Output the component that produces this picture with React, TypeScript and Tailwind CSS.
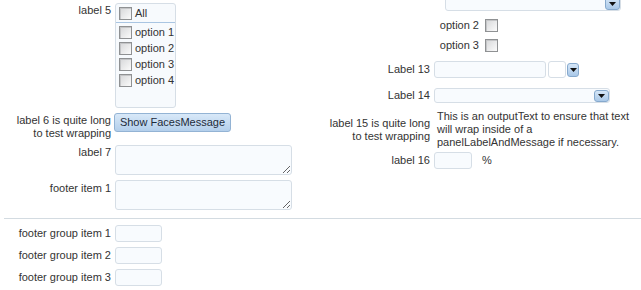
import React from 'react';

const Check = () => (
    <span className="inline-block w-[13px] h-[13px] shrink-0 border border-[#8f9193] bg-gradient-to-br from-[#d6d7d9] to-[#fbfbfb] shadow-[inset_1px_1px_0_#c4c5c7]" />
);

const Arrow = () => (
    <svg width="7" height="4" viewBox="0 0 7 4" className="block">
        <path d="M0 0h7L3.5 4z" fill="#111" />
    </svg>
);

const DropBtn = ({ className = '' }: { className?: string }) => (
    <span
        className={`flex items-center justify-center rounded-[3px] border border-[#86a9cd] bg-gradient-to-b from-[#d5e6f7] to-[#a9c8e8] ${className}`}
    >
        <Arrow />
    </span>
);

const field = 'block rounded-[3px] border border-[#d6dee6] bg-[#f8fbfe] outline-none';

export default function App() {
    return (
        <div className="w-[641px] h-[290px] overflow-hidden bg-white text-[11px] leading-[13px] text-[#333] font-['Liberation_Sans',Arial,sans-serif]">
            <div className="flex">
                {/* left column */}
                <div className="w-[320px] shrink-0 flex flex-col pt-[3px]">
                    <div className="flex gap-[4px]">
                        <div className="w-[111px] text-right pt-[1px]">label 5</div>
                        <div className="w-[61px] h-[105px] rounded-[3px] border border-[#d6dee6] bg-[#f7fafd]">
                            <div className="h-[19px] flex items-center gap-[3px] pl-[3px] border-b border-[#a9c5e2]">
                                <Check />
                                <span>All</span>
                            </div>
                            <div className="pt-[1px]">
                                {['option 1', 'option 2', 'option 3', 'option 4'].map((o) => (
                                    <div key={o} className="h-[16px] flex items-center gap-[3px] pl-[3px]">
                                        <Check />
                                        <span className="whitespace-nowrap">{o}</span>
                                    </div>
                                ))}
                            </div>
                        </div>
                    </div>

                    <div className="flex gap-[3px] mt-[5px]">
                        <div className="w-[111px] text-right pt-[1px]">
                            label 6 is quite long
                            <br />
                            to test wrapping
                        </div>
                        <button className="w-[117px] h-[19px] rounded-[3px] border border-[#93b3d4] bg-gradient-to-b from-[#d8e8f8] to-[#b3cfeb] text-[#1d2b3a] text-[11px] leading-[13px]">
                            Show FacesMessage
                        </button>
                    </div>

                    <div className="flex gap-[4px] mt-[5px]">
                        <div className="w-[111px] text-right pt-[1px]">label 7</div>
                        <textarea className={`${field} w-[177px] h-[30px]`} />
                    </div>

                    <div className="flex gap-[4px] mt-[5px]">
                        <div className="w-[111px] text-right pt-[2px]">footer item 1</div>
                        <textarea className={`${field} w-[177px] h-[30px]`} />
                    </div>
                </div>

                {/* right column */}
                <div className="flex-1 flex flex-col">
                    <div className="-mt-[5px] ml-[125px] w-[176px] h-[16px] relative rounded-[3px] border border-[#d6dee6] bg-[#f8fbfe]">
                        <DropBtn className="absolute right-0 bottom-0 w-[15px] h-[13px]" />
                    </div>

                    <div className="flex items-center gap-[6px] mt-[8px]">
                        <div className="w-[159px] text-right">option 2</div>
                        <Check />
                    </div>
                    <div className="flex items-center gap-[6px] mt-[7px]">
                        <div className="w-[159px] text-right">option 3</div>
                        <Check />
                    </div>

                    <div className="flex items-center mt-[9px]">
                        <div className="w-[110px] text-right mr-[4px]">Label 13</div>
                        <input className={`${field} w-[112px] h-[17px]`} />
                        <input className="block w-[18px] h-[17px] ml-[2px] rounded-[3px] border border-[#d6dee6] bg-white outline-none" />
                        <DropBtn className="w-[12px] h-[14px] ml-[1px]" />
                    </div>

                    <div className="flex items-center mt-[10px]">
                        <div className="w-[110px] text-right mr-[4px]">Label 14</div>
                        <div className="w-[176px] h-[15px] relative rounded-[3px] border border-[#d6dee6] bg-[#f8fbfe]">
                            <DropBtn className="absolute right-0 top-[1px] w-[15px] h-[12px]" />
                        </div>
                    </div>

                    <div className="flex items-center mt-[7px]">
                        <div className="w-[110px] text-right mr-[4px]">
                            label 15 is quite long
                            <br />
                            to test wrapping
                        </div>
                        <div className="pl-[3px] whitespace-nowrap">
                            This is an outputText to ensure that text
                            <br />
                            will wrap inside of a
                            <br />
                            panelLabelAndMessage if necessary.
                        </div>
                    </div>

                    <div className="flex items-center mt-[3px]">
                        <div className="w-[110px] text-right mr-[4px]">label 16</div>
                        <input className={`${field} w-[38px] h-[17px]`} />
                        <span className="ml-[10px]">%</span>
                    </div>
                </div>
            </div>

            <div className="ml-[4px] mt-[8px] border-t border-[#d3dbe1]" />

            <div className="flex flex-col gap-[5px] mt-[6px]">
                {['footer group item 1', 'footer group item 2', 'footer group item 3'].map((t) => (
                    <div key={t} className="flex items-center gap-[4px]">
                        <div className="w-[111px] text-right whitespace-nowrap">{t}</div>
                        <input className={`${field} w-[47px] h-[17px]`} />
                    </div>
                ))}
            </div>
        </div>
    );
}
